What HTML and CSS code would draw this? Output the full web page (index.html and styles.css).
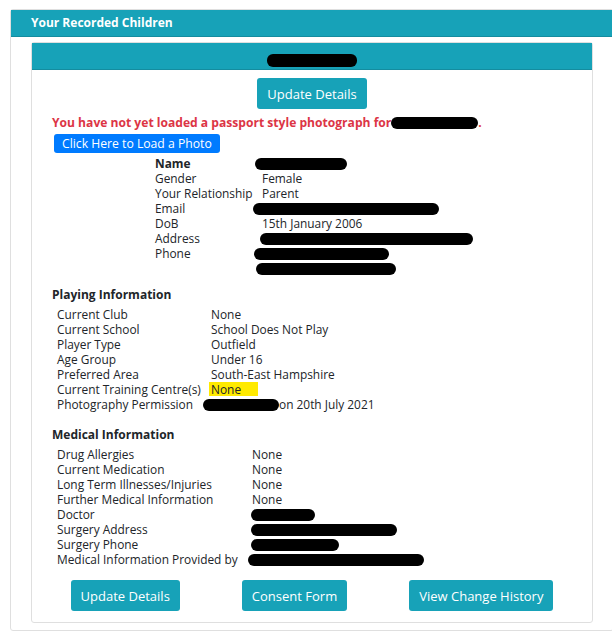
FILE: index.html
```html
<!DOCTYPE html>
<html>
<head>
  <meta charset="UTF-8">
  <title>Your Recorded Children</title>
  <link rel="stylesheet" href="styles.css">
</head>
<body>
  <div class="panel">
    <div class="panel-heading">Your Recorded Children</div>
    <div class="panel-body">

      <div class="child-card">
        <div class="child-heading"><span class="redact redact-title"></span></div>
        <div class="child-body">
          <div class="top-actions">
            <button class="btn">Update Details</button>
          </div>
          <p class="photo-warning">You have not yet loaded a passport style photograph for<span class="redact redact-warn"></span>.</p>
          <button class="btn-photo">Click Here to Load a Photo</button>

          <div class="details">
            <div class="strong">Name</div><div><span class="redact redact-name"></span></div>
            <div>Gender</div><div>Female</div>
            <div>Your Relationship</div><div>Parent</div>
            <div>Email</div><div><span class="redact redact-email"></span></div>
            <div>DoB</div><div>15th January 2006</div>
            <div>Address</div><div><span class="redact redact-address"></span></div>
            <div>Phone</div><div><span class="redact redact-phone"></span></div>
            <div></div><div><span class="redact redact-phone2"></span></div>
          </div>

          <h4 class="section-title playing-title">Playing Information</h4>
          <div class="info playing">
            <div>Current Club</div><div>None</div>
            <div>Current School</div><div>School Does Not Play</div>
            <div>Player Type</div><div>Outfield</div>
            <div>Age Group</div><div>Under 16</div>
            <div>Preferred Area</div><div>South-East Hampshire</div>
            <div>Current Training Centre(s)</div><div><span class="highlight">None</span></div>
            <div>Photography Permission</div><div><span class="redact redact-permission"></span>on 20th July 2021</div>
          </div>

          <h4 class="section-title medical-title">Medical Information</h4>
          <div class="info medical">
            <div>Drug Allergies</div><div>None</div>
            <div>Current Medication</div><div>None</div>
            <div>Long Term Illnesses/Injuries</div><div>None</div>
            <div>Further Medical Information</div><div>None</div>
            <div>Doctor</div><div><span class="redact redact-doctor"></span></div>
            <div>Surgery Address</div><div><span class="redact redact-surgery"></span></div>
            <div>Surgery Phone</div><div><span class="redact redact-surgery-phone"></span></div>
            <div>Medical Information Provided by</div><div><span class="redact redact-provided"></span></div>
          </div>

          <div class="actions">
            <button class="btn">Update Details</button>
            <button class="btn">Consent Form</button>
            <button class="btn">View Change History</button>
          </div>
        </div>
      </div>

    </div>
  </div>
</body>
</html>
```

FILE: styles.css
```css
html, body {
  overflow-x: hidden;
}
body {
  margin: 0;
  font-family: "Open Sans", "Noto Sans", Arial, sans-serif;
  color: #212529;
  background: #fff;
}
.panel {
  box-sizing: border-box;
  width: 604px;
  margin: 9px 0 0 10px;
  border: 1px solid #dfdfdf;
  border-radius: 3px;
}
.panel-heading {
  height: 26px;
  line-height: 26px;
  padding-left: 20px;
  background-color: #17a2b8;
  border-bottom: 1px solid #148c9f;
  color: #fff;
  font-size: 12px;
  font-weight: 700;
}
.panel-body {
  padding: 5px 20px 7px;
}
.child-card {
  border: 1px solid #dfdfdf;
  border-radius: 3px;
}
.child-heading {
  box-sizing: border-box;
  height: 27px;
  padding-top: 11px;
  background-color: #17a2b8;
  border-bottom: 1px solid #148c9f;
}
.child-body {
  padding: 8px 20px 11px;
}
.top-actions {
  text-align: center;
}
.btn {
  height: 31px;
  padding: 0 10px;
  border: none;
  border-radius: 3px;
  background-color: #17a2b8;
  color: #fff;
  font-family: inherit;
  font-size: 13px;
  cursor: pointer;
}
.btn:hover {
  background-color: #138496;
}
.photo-warning {
  margin: 6px 0 0;
  line-height: 15px;
  color: #dc3545;
  font-size: 12.1px;
  font-weight: 700;
}
.btn-photo {
  display: block;
  height: 19px;
  margin: 4px 0 0 2px;
  padding: 0 8px;
  border: none;
  border-radius: 3px;
  background-color: #007bff;
  color: #fff;
  font-family: inherit;
  font-size: 12.2px;
  line-height: 19px;
  cursor: pointer;
}
.details,
.info {
  display: grid;
  font-size: 11.9px;
  line-height: 15px;
  white-space: nowrap;
}
.details {
  grid-template-columns: 107px 1fr;
  margin: 3px 0 0 103px;
}
.strong {
  font-weight: 700;
}
.section-title {
  margin: 0;
  font-size: 12px;
  font-weight: 700;
  line-height: 17px;
}
.playing-title {
  margin-top: 10px;
}
.medical-title {
  margin-top: 14px;
}
.info {
  margin: 4px 0 0 5px;
}
.playing {
  grid-template-columns: 154px 1fr;
}
.medical {
  grid-template-columns: 195px 1fr;
}
.highlight {
  display: inline-block;
  box-sizing: border-box;
  width: 49px;
  height: 14px;
  margin-left: -2px;
  padding-left: 2px;
  line-height: 14px;
  vertical-align: top;
  background-color: #ffea00;
}
.actions {
  display: flex;
  justify-content: center;
  gap: 62px;
  margin-top: 13px;
}

/* blacked-out personal details */
.redact {
  display: inline-block;
  height: 12px;
  border-radius: 6px;
  background: #000;
  vertical-align: -2px;
}
.redact-title {
  display: block;
  width: 90px;
  height: 13px;
  margin: 0 auto;
}
.redact-warn { width: 87px; }
.redact-name { width: 92px; margin-left: -7px; }
.redact-email { width: 186px; margin-left: -9px; }
.redact-address { width: 213px; margin-left: -2px; }
.redact-phone { width: 135px; margin-left: -8px; }
.redact-phone2 { width: 140px; margin-left: -6px; }
.redact-permission { width: 76px; margin-left: -8px; }
.redact-doctor { width: 64px; margin-left: -1px; }
.redact-surgery { width: 146px; margin-left: -1px; }
.redact-surgery-phone { width: 88px; margin-left: -1px; }
.redact-provided { width: 176px; margin-left: -4px; }
```
